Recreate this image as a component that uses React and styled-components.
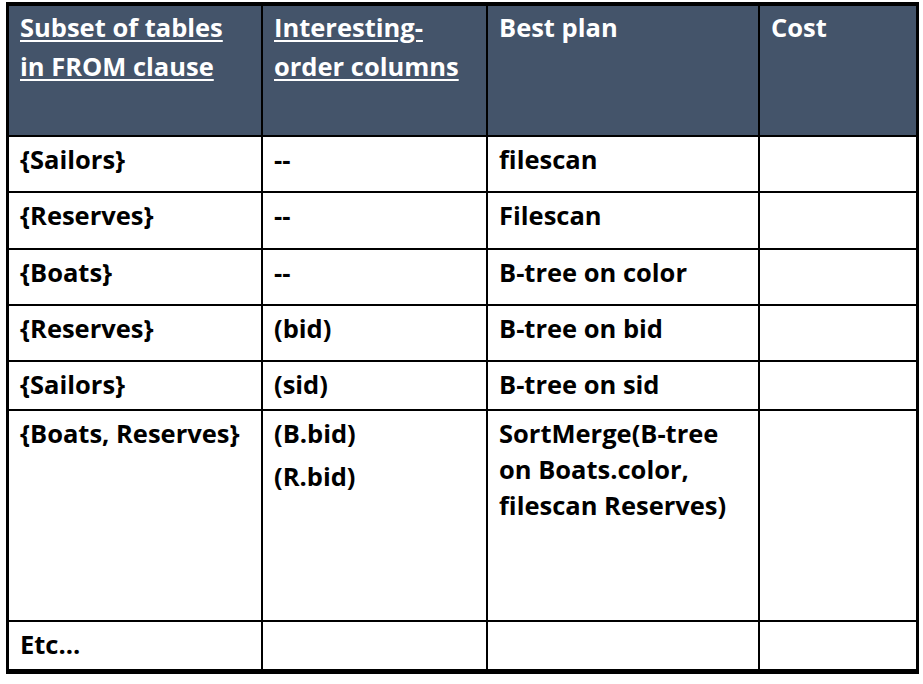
import styled, { createGlobalStyle } from "styled-components";

const GlobalStyle = createGlobalStyle`
    html, body {
        margin: 0;
        padding: 0;
        background: #ffffff;
    }
    body {
        font-family: "Open Sans", "Liberation Sans", sans-serif;
        font-variant-ligatures: none;
    }
`;

const headers = [
    { lines: ["Subset of tables", "in FROM clause"], underline: true },
    { lines: ["Interesting-", "order columns"], underline: true },
    { lines: ["Best plan"], underline: false },
    { lines: ["Cost"], underline: false },
];

const rows = [
    { height: 56, cells: [["{Sailors}"], ["--"], ["filescan"], []] },
    { height: 57, cells: [["{Reserves}"], ["--"], ["Filescan"], []] },
    { height: 56, cells: [["{Boats}"], ["--"], ["B-tree on color"], []] },
    { height: 56, cells: [["{Reserves}"], ["(bid)"], ["B-tree on bid"], []] },
    { height: 49, cells: [["{Sailors}"], ["(sid)"], ["B-tree on sid"], []] },
    {
        height: 211,
        cells: [
            ["{Boats, Reserves}"],
            ["(B.bid)", "(R.bid)"],
            [["SortMerge(B-tree", "on Boats.color,", "filescan Reserves)"]],
            [],
        ],
    },
    { height: 46, cells: [["Etc..."], [], [], []], last: true },
];

const widths = [254, 225, 272, 156];

export default function App() {
    return (
        <>
            <GlobalStyle />
            <Page>
                <Table>
                    <colgroup>
                        {widths.map((w, i) => (
                            <col key={i} style={{ width: w }} />
                        ))}
                    </colgroup>
                    <thead>
                        <HeadRow>
                            {headers.map((h, i) => (
                                <HeadCell key={i} $lastCol={i === headers.length - 1}>
                                    <HeadText $underline={h.underline}>
                                        {h.lines.map((line, j) => (
                                            <span key={j}>
                                                {line}
                                                {j < h.lines.length - 1 && <br />}
                                            </span>
                                        ))}
                                    </HeadText>
                                </HeadCell>
                            ))}
                        </HeadRow>
                    </thead>
                    <tbody>
                        {rows.map((row, r) => (
                            <tr key={r} style={{ height: row.height }}>
                                {row.cells.map((paras, c) => (
                                    <Cell key={c} $lastCol={c === 3} $lastRow={row.last}>
                                        {paras.map((p, k) => (
                                            <Para key={k}>
                                                {Array.isArray(p)
                                                    ? p.map((line, j) => (
                                                          <span key={j}>
                                                              {line}
                                                              {j < p.length - 1 && <br />}
                                                          </span>
                                                      ))
                                                    : p}
                                            </Para>
                                        ))}
                                    </Cell>
                                ))}
                            </tr>
                        ))}
                    </tbody>
                </Table>
            </Page>
        </>
    );
}

const Page = styled.div`
    width: 923px;
    height: 684px;
    padding: 2px 0 0 6px;
    box-sizing: border-box;
`;

const Table = styled.table`
    width: 913px;
    table-layout: fixed;
    border-collapse: separate;
    border-spacing: 0;
    border-top: 4px solid #000;
    border-left: 3px solid #000;
    border-right: 3px solid #000;
    border-bottom: 5px solid #000;
    box-sizing: border-box;
`;

const HeadRow = styled.tr`
    height: 131px;
    background-color: #44546a;
`;

const HeadCell = styled.th`
    padding: 2px 6px 0 11px;
    vertical-align: top;
    text-align: left;
    border-right: ${(p) => (p.$lastCol ? "none" : "2px solid #000")};
    border-bottom: 2px solid #000;
    box-sizing: border-box;
`;

const HeadText = styled.div`
    font-size: 25.5px;
    line-height: 39px;
    font-weight: 700;
    color: #ffffff;
    white-space: nowrap;
    text-decoration: ${(p) => (p.$underline ? "underline" : "none")};
    text-decoration-thickness: 2px;
    text-underline-offset: 3px;
`;

const Cell = styled.td`
    padding: 4px 6px 0 11px;
    vertical-align: top;
    border-right: ${(p) => (p.$lastCol ? "none" : "2px solid #000")};
    border-bottom: ${(p) => (p.$lastRow ? "none" : "2px solid #000")};
    box-sizing: border-box;
`;

const Para = styled.p`
    margin: 0 0 7px;
    font-size: 25.5px;
    line-height: 36px;
    font-weight: 700;
    color: #000000;
    white-space: nowrap;
`;
